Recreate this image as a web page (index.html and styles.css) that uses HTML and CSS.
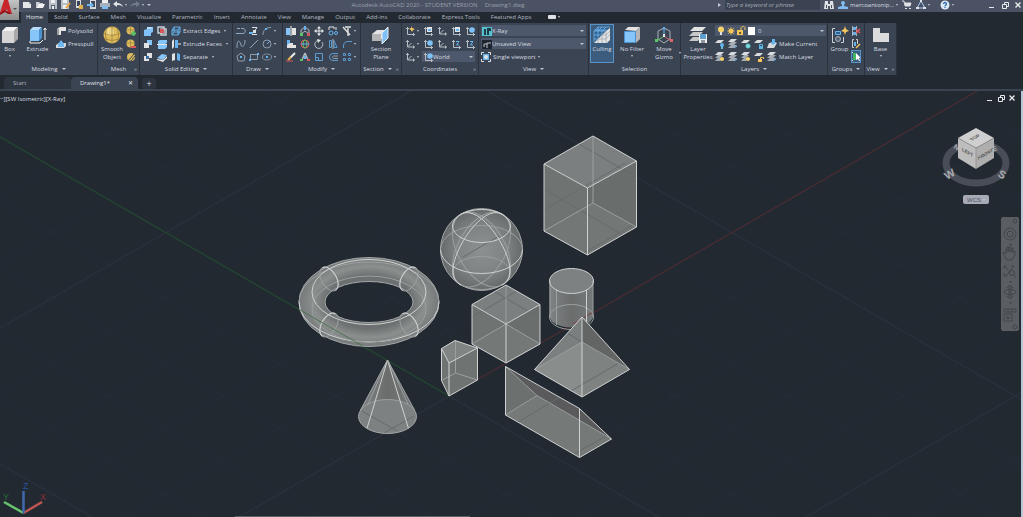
FILE: index.html
```html
<!DOCTYPE html>
<html lang="en">
<head>
    <meta charset="UTF-8">
    <meta name="viewport" content="width=device-width, initial-scale=1.0">
    <title>Autodesk AutoCAD 2020 - Drawing1.dwg</title>
    <link rel="stylesheet" href="styles.css">
</head>
<body>
    <!-- Icon sprite -->
    <svg class="sprite" aria-hidden="true">
        <symbol id="new" viewBox="0 0 10 10"><path fill="#e4e6e8" d="M1 2h6l2 2v4H1z"/><path fill="#9aa1aa" d="M7 2l2 2H7z"/></symbol>
        <symbol id="open" viewBox="0 0 10 10"><path fill="#c9cdd2" d="M1 2h3l1 1h3v1H3L1 8z"/><path fill="#eef0f1" d="M3 4h7L8 8H1z"/></symbol>
        <symbol id="save" viewBox="0 0 10 10"><path fill="#b9bfc6" d="M1 0h8v9H1z"/><path fill="#eceef0" d="M3 0h4v3H3z"/><path fill="#5b6675" d="M3 5h4v4H3z"/><path fill="#eceef0" d="M4 6h2v3H4z"/></symbol>
        <symbol id="saveas" viewBox="0 0 10 10"><path fill="#b9bfc6" d="M0 0h8v9H0z"/><path fill="#eceef0" d="M2 0h4v3H2zM2 5h4v4H2z"/><path stroke="#e8a33c" stroke-width="2" d="M9 3L5 8"/></symbol>
        <symbol id="web" viewBox="0 0 10 10"><path fill="#d9dcdf" d="M2 0h5v8H2z"/><path fill="#3c4656" d="M3 1h3v5H3z"/><path fill="#e2b04d" d="M5 5h4v4H5z"/></symbol>
        <symbol id="phone" viewBox="0 0 10 10"><path fill="#d9dcdf" d="M3 0h6v9H3z"/><path fill="#3c4656" d="M4 1h4v6H4z"/><path fill="#6cb6f0" d="M0 4h4V2l3 3-3 3V6H0z"/></symbol>
        <symbol id="print" viewBox="0 0 10 10"><path fill="#eceef0" d="M2 0h6v4H2z"/><path fill="#aab0b8" d="M0 3h10v4H0z"/><path fill="#7fbdf0" d="M2 6h6v3H2z"/></symbol>
        <symbol id="undo" viewBox="0 0 10 10"><path fill="#e4e6e8" d="M0 4l4-3v2c3 0 5 1 6 4-2-2-4-2-6-2v2z"/></symbol>
        <symbol id="redo" viewBox="0 0 10 10"><path fill="#737c8a" d="M10 4L6 1v2C3 3 1 4 0 7c2-2 4-2 6-2v2z"/></symbol>
        <symbol id="binoc" viewBox="0 0 10 10"><path fill="#dfe2e5" d="M1 1h3v3h2V1h3l1 8H6V6H4v3H0z"/><path fill="#4a5264" d="M2 5h1v3H2zM7 5h1v3H7z"/></symbol>
        <symbol id="user" viewBox="0 0 10 10"><circle cx="5" cy="3" r="2" fill="#7fbdf0"/><path fill="#7fbdf0" d="M4 4h2v2l4 1v2H0V7l4-1z"/></symbol>
        <symbol id="cart" viewBox="0 0 10 10"><path fill="none" stroke="#dfe2e5" d="M0 1h2l1 5h5l1-3H3"/><path fill="#dfe2e5" d="M3 3h6L8 6H3zM3 8h2v1H3zM7 8h2v1H7z"/></symbol>
        <symbol id="apps" viewBox="0 0 10 10"><path fill="none" stroke="#aacdf0" d="M5 1l4 7H1z"/><path fill="#dfe2e5" d="M4 0h2v2H4zM0 7h3v2H0zM7 7h3v2H7z"/></symbol>
        <symbol id="help" viewBox="0 0 10 10"><circle cx="5" cy="5" r="4.5" fill="#dce8f3"/><path fill="none" stroke="#2b6cb0" stroke-width="1.3" d="M3.5 4c0-2 3-2 3 0 0 1-1.500 1-1.500 2.300M5 7v1"/></symbol>

        <symbol id="box" viewBox="0 0 18 18"><path fill="#d5d5d5" d="M1 5h12v12H1z"/><path fill="#f3f3f3" d="M1 5l4-4h12l-4 4z"/><path fill="#a9a9a9" d="M13 5l4-4v12l-4 4z"/></symbol>
        <symbol id="extrude" viewBox="0 0 18 18"><path fill="#86c5f8" d="M1 4h9v11H1z"/><path fill="#b7defc" d="M1 4l3-3h9l-3 3z"/><path fill="#4b92cf" d="M10 4l3-3v11l-3 3z"/><path fill="none" stroke="#f0f0f0" d="M1 15v2h10l3-3M16 14V2M14.500 4L16 2l1.500 2"/></symbol>
        <symbol id="polysolid" viewBox="0 0 10 10"><path fill="#e3e3e3" d="M1 3l3-2h6v4H5v4H1z"/><path fill="#9c9c9c" d="M1 3h2v6H1z"/></symbol>
        <symbol id="presspull" viewBox="0 0 10 10"><path fill="#d9dcdf" d="M0 6l3-2h7v3L8 9H0z"/><path fill="#6fb8f2" d="M2 5l3-4 3 4v3H2z"/></symbol>
        <symbol id="smooth" viewBox="0 0 18 18"><circle cx="9" cy="9" r="8.500" fill="#dcbb5c"/><circle cx="7" cy="6" r="4" fill="#efd788"/><path fill="none" stroke="#957a31" stroke-width=".7" d="M1 7c5 3 11 3 16 0M1 12c5 3 11 3 16 0M9 1v16M4 2c-2 5-2 9 0 14M14 2c2 5 2 9 0 14"/></symbol>
        <symbol id="meshadd" viewBox="0 0 10 10"><circle cx="4.500" cy="4.500" r="4" fill="#dcbb5c"/><path stroke="#957a31" stroke-width=".6" fill="none" d="M1 4h7M4.500 1v7"/><path stroke="#5bc466" stroke-width="2" d="M5 7.500h5M7.500 5v5"/></symbol>
        <symbol id="meshdel" viewBox="0 0 10 10"><circle cx="4.500" cy="4.500" r="4" fill="#dcbb5c"/><path stroke="#957a31" stroke-width=".6" fill="none" d="M1 4h7M4.500 1v7"/><path stroke="#d9575b" stroke-width="2" d="M5 8h5"/></symbol>
        <symbol id="meshcut" viewBox="0 0 10 10"><circle cx="5" cy="5" r="4" fill="#dcbb5c"/><path stroke="#3b4453" stroke-width="1" d="M2 9L8 2M4 10l6-7"/></symbol>
        <symbol id="union" viewBox="0 0 10 10"><path fill="#7fc1f6" d="M1 4l3-1V1h6v5L8 7v3H1z"/><path fill="#b7defc" d="M4 1h6L8 3H4z"/></symbol>
        <symbol id="subtract" viewBox="0 0 10 10"><path fill="#86c5f8" d="M4 1h5v5H4z"/><path fill="#e3e3e3" d="M1 4h5v5H1z"/></symbol>
        <symbol id="intersect" viewBox="0 0 10 10"><path fill="#e3e3e3" d="M4 1h5v5H4zM1 4h5v5H1z"/><path fill="#3c6ea3" d="M3 4h3v3H3z"/></symbol>
        <symbol id="interfere" viewBox="0 0 10 10"><path fill="none" stroke="#c9cdd2" stroke-width="1.500" d="M1 1h6v6H1zM4 3h5v6H4z"/><path fill="#d9575b" d="M3 3h4v4H3z"/></symbol>
        <symbol id="slice" viewBox="0 0 10 10"><path fill="#86c5f8" d="M1 2l2-1h7v3L8 5H1zM1 6h7l2-1v3L8 10H1z"/><path stroke="#e3e3e3" d="M0 5.500h10"/></symbol>
        <symbol id="thicken" viewBox="0 0 10 10"><path fill="#86c5f8" d="M0 6l5-4 5 1-4 5z"/><path fill="#e3e3e3" d="M0 7l6 1 4-4v2L6 10 0 8z"/></symbol>
        <symbol id="extract" viewBox="0 0 10 10"><path fill="none" stroke="#67b3ee" d="M1 4h6v5H1zM1 4l2-3h6v5L7 9M7 4l2-3M3 1v5H9M3 6L1 9"/></symbol>
        <symbol id="faces" viewBox="0 0 10 10"><path fill="#e3e3e3" d="M1 2l2-2v8l-2 2z"/><path fill="#67b3ee" d="M4 1h3v8H4z"/><path stroke="#f0f0f0" d="M7 5h3"/></symbol>
        <symbol id="separate" viewBox="0 0 10 10"><path fill="#e3e3e3" d="M1 2l3-1v7L1 9z"/><path fill="#67b3ee" d="M6 1l3 1v7L6 8z"/></symbol>

        <symbol id="pline" viewBox="0 0 10 10"><path fill="none" stroke="#8fa9c2" d="M1 2.500h3M5 2.500h2c3 0 3 5 0 5H0"/></symbol>
        <symbol id="helix" viewBox="0 0 10 10"><path fill="none" stroke="#dfe2e5" d="M3 1.500h5L5 6M3 8.500h5"/><path fill="#67b3ee" d="M0 6h4v2H0z"/><path fill="#dfe2e5" d="M4 4h3v3H4z"/></symbol>
        <symbol id="arc" viewBox="0 0 10 10"><path fill="none" stroke="#8fa0b2" d="M1 9c0-5 3-7.500 8-7.500"/><path fill="#67b3ee" d="M3 2h2v2H3z"/></symbol>
        <symbol id="spline" viewBox="0 0 10 10"><path fill="none" stroke="#8fa9c2" d="M1 9c0-12 4-5 4-3s4 3 4-5"/></symbol>
        <symbol id="line" viewBox="0 0 10 10"><path stroke="#8fa9c2" d="M1 9l8-8"/></symbol>
        <symbol id="circle" viewBox="0 0 10 10"><circle cx="5" cy="5" r="4" fill="none" stroke="#8e9baa"/><path stroke="#67b3ee" d="M5 5l3-3"/></symbol>
        <symbol id="polygon" viewBox="0 0 10 10"><path fill="none" stroke="#8e9baa" d="M5 1l4 3-1 5H2L1 4z"/><path fill="#67b3ee" d="M4 4h2v2H4z"/></symbol>
        <symbol id="rect" viewBox="0 0 10 10"><path fill="none" stroke="#8e9baa" d="M1.500 2.500h7v5h-7z"/><path fill="#67b3ee" d="M0 7h2v2H0zM8 1h2v2H8z"/></symbol>
        <symbol id="ellipse" viewBox="0 0 10 10"><ellipse cx="5" cy="5" rx="4.500" ry="3" fill="none" stroke="#7d8c9d"/><path fill="#67b3ee" d="M4 4h2v2H4z"/></symbol>

        <symbol id="mirror" viewBox="0 0 10 10"><path fill="#86c5f8" d="M0 2h4v7H0z"/><path fill="#e3e3e3" d="M6 2h4v7H6z"/><path stroke="#fff" d="M5 0v10"/></symbol>
        <symbol id="gmove" viewBox="0 0 10 10"><path fill="none" stroke="#b4bac2" d="M5 1l4 3v4L5 5 1 8V4z"/><path fill="#d9575b" d="M7 7h3v3H7z"/><path fill="#5bc466" d="M0 7h3v3H0z"/><path fill="#67b3ee" d="M4 0h2v4H4z"/></symbol>
        <symbol id="move" viewBox="0 0 10 10"><path fill="#e8eaec" d="M5 0l2 2.500H5.500v2h2V3L10 5 7.500 7V5.500h-2v2H7L5 10 3 7.500h1.500v-2h-2V7L0 5l2.500-2v1.500h2v-2H3z"/></symbol>
        <symbol id="copy" viewBox="0 0 10 10"><circle cx="3" cy="7" r="2" fill="none" stroke="#67b3ee"/><circle cx="8" cy="7" r="1.500" fill="none" stroke="#67b3ee"/><path fill="none" stroke="#dfe2e5" d="M1 4V1h5v2M8 1v3"/></symbol>
        <symbol id="trim" viewBox="0 0 10 10"><path fill="none" stroke="#e3e3e3" stroke-width="1.400" d="M1 1l7 8M9 1H3M6 2v8"/></symbol>
        <symbol id="align" viewBox="0 0 10 10"><path fill="#67b3ee" d="M1 1h3v8H1z"/><path fill="#e3e3e3" d="M1 6l3-2h3v2h3v3H1z"/></symbol>
        <symbol id="grotate" viewBox="0 0 10 10"><circle cx="5" cy="5" r="4" fill="none" stroke="#d9575b"/><ellipse cx="5" cy="5" rx="2" ry="4" fill="none" stroke="#5bc466"/><path stroke="#67b3ee" d="M1 5h8"/></symbol>
        <symbol id="rotate" viewBox="0 0 10 10"><path fill="none" stroke="#b9bfc7" d="M4 1.500a4 4 0 1 0 4 1.500"/><path fill="#dfe2e5" d="M3 0l4 1-3 3z"/></symbol>
        <symbol id="flip" viewBox="0 0 10 10"><path fill="none" stroke="#5a9bd0" d="M1.500 1.500h2v7h-2zM6 8.500v-7l3 7z"/><path stroke="#aab1ba" d="M5 0v10"/></symbol>
        <symbol id="fillet" viewBox="0 0 10 10"><path fill="none" stroke="#5a9bd0" d="M1.500 9V7c0-3 2-4.500 4.500-4.500h4"/></symbol>
        <symbol id="erase" viewBox="0 0 10 10"><path stroke="#eceef0" stroke-width="2" d="M4 6l5-5"/><path stroke="#e2b04d" stroke-width="2" d="M2 8l3-3"/><path stroke="#d9575b" d="M0 9h7"/></symbol>
        <symbol id="gscale" viewBox="0 0 10 10"><path fill="none" stroke="#b4bac2" stroke-width="1.500" d="M5 1L2 8M5 1l3 7"/><path fill="#67b3ee" d="M4 4h2v3H4z"/><path fill="#5bc466" d="M0 7h3v2H0z"/><path fill="#d9575b" d="M7 7h3v2H7z"/></symbol>
        <symbol id="scale" viewBox="0 0 10 10"><path fill="none" stroke="#5a9bd0" d="M1.500 8.500v-7h7v7zM1.500 5.500h3v3"/></symbol>
        <symbol id="offset" viewBox="0 0 10 10"><path fill="none" stroke="#5a9bd0" d="M10 1.500H5a3.500 3.500 0 0 0 0 7h5"/><path fill="none" stroke="#9aa2ad" d="M10 4H6c-2 0-2 2.500 0 2.500h4"/></symbol>
        <symbol id="array" viewBox="0 0 10 10"><path fill="none" stroke="#5a9bd0" d="M1.500 1.500h2v2h-2zM6.500 1.500h2v2h-2zM1.500 6.500h2v2h-2zM6.500 6.500h2v2h-2z"/></symbol>

        <symbol id="section" viewBox="0 0 18 18"><path fill="#e3e3e3" d="M0 8l5-4h8v9H0z"/><path fill="#b5b5b5" d="M0 8h9v7H0z"/><path fill="#7fc1f6" stroke="#e9eef3" d="M10 7l6-6v11l-6 6z"/></symbol>
        <symbol id="ucs" viewBox="0 0 10 10"><path fill="none" stroke="#b7bdc5" d="M2.500 1v7H10M1 2.500h3M8.500 6.500v3M2.500 8l4-4"/></symbol>
        <symbol id="ucsworld" viewBox="0 0 10 10"><path fill="none" stroke="#b7bdc5" d="M2.500 1v7.500H10M1 2.500h3M8.500 7v3"/><circle cx="7" cy="4" r="2.800" fill="#7fc1f6"/></symbol>
        <symbol id="ucsstar" viewBox="0 0 10 10"><path fill="none" stroke="#b7bdc5" d="M2.500 1v7.500H10M1 2.500h3M8.500 7v3"/><path fill="#f4c65d" d="M6 0l1 2 3 1-2 1-1 2-1-2-2-1 2-1z"/></symbol>
        <symbol id="ucsface" viewBox="0 0 10 10"><path fill="none" stroke="#b7bdc5" d="M2.500 1v7.500H10M1 2.500h3M8.500 7v3"/><path fill="#dfe5ea" d="M4 1h5v5H4z"/><path fill="#67b3ee" d="M5 3h3v2H5z"/></symbol>
        <symbol id="ucsz" viewBox="0 0 10 10"><path fill="none" stroke="#b7bdc5" d="M2.500 1v7.500H10M1 2.500h3M8.500 7v3"/><path fill="none" stroke="#67b3ee" d="M5 2.500h3L5.500 6H8"/></symbol>

        <symbol id="xray" viewBox="0 0 10 10"><path fill="#54c3cf" d="M0 1h10v9H0z"/><path fill="#1d3b45" d="M2 3h2v6H2zM5 2h4v3H7v4H5z"/></symbol>
        <symbol id="unsaved" viewBox="0 0 10 10"><path fill="#1f252e" d="M0 1h10v9H0z"/><path fill="none" stroke="#bfc4ca" d="M2 8V5h3M5 9V4h4"/></symbol>
        <symbol id="viewport" viewBox="0 0 10 10"><path fill="none" stroke="#dfe2e5" d="M.5 3V.5H3M7 .5h2.500V3M9.500 7v2.500H7M3 9.500H.5V7"/><path fill="#67b3ee" d="M2 2h6v6H2z"/><circle cx="5" cy="5" r="2" fill="#e3e3e3"/></symbol>
        <symbol id="culling" viewBox="0 0 18 18"><path fill="#e3e3e3" d="M1 17L13 5l4-3v12l-3 3z"/><path fill="#2f6392" d="M1 5l4-4h12L1 16z"/><path fill="none" stroke="#7fc1f6" stroke-width=".7" d="M1 16V5l4-4h12M1 5h12M1 9h8M1 13h4M5 12V5l4-4M9 8V5l4-4M5 1v4M2 4h12"/><path fill="none" stroke="#9aa1aa" stroke-width=".7" d="M13 5v12M9 9v8M5 13v4M9 9h4l4-4M5 13h8l4-5"/></symbol>
        <symbol id="nofilter" viewBox="0 0 18 18"><path fill="#e3e3e3" d="M2 4l3-3h12l-4 4z"/><path fill="#b5b5b5" d="M13 5l4-4v12l-4 4z"/><path fill="#86c5f8" stroke="#4b92cf" d="M1.500 5.500h11v11h-11z"/></symbol>
        <symbol id="gizmo" viewBox="0 0 18 18"><path fill="none" stroke="#a9b0b9" d="M3 13V5l6-3 6 3v8l-6 4z"/><path fill="none" stroke="#67b3ee" d="M9 10V2M7.500 3.500L9 1l1.500 2.500"/><path stroke="#5bc466" d="M9 10l-7 5"/><path stroke="#e06567" d="M9 10l7 5"/><path fill="#5bc466" d="M0 13h3v3H0z"/><path fill="#e06567" d="M15 13h3v3h-3z"/><path fill="#e3e3e3" d="M8 8h2v3H8z"/></symbol>
        <symbol id="layers" viewBox="0 0 18 18"><path fill="#e3e3e3" d="M5 1h12l-4 4H1z"/><path fill="#c7c7c7" d="M4 6h10l-4 4H0zM4 11h8l-3 4H0z"/><path fill="#f0f0f0" d="M10 8h8v9h-8z"/><path fill="#5e9fd4" d="M11 8h6v5h-6z"/><path fill="#8d96a1" d="M12 14h4v3h-4z"/></symbol>

        <symbol id="bulb" viewBox="0 0 10 10"><circle cx="5" cy="3.500" r="3" fill="#f4d26b"/><path fill="#dfe2e5" d="M4 6h2v3H4z"/></symbol>
        <symbol id="sun" viewBox="0 0 10 10"><circle cx="5" cy="5" r="2.500" fill="#f4c65d"/><path stroke="#f4c65d" stroke-width=".6" d="M5 1v8M1 5h8M2 2l6 6M8 2L2 8"/></symbol>
        <symbol id="lock" viewBox="0 0 10 10"><path fill="#f4c65d" d="M1 4h6v5H1z"/><path fill="none" stroke="#f4c65d" d="M5 4V2c0-2 4-2 4 0v2"/><path fill="#6b5a2c" d="M3 6h2v2H3z"/></symbol>
        <symbol id="swatch" viewBox="0 0 10 10"><path fill="#fff" d="M2 1h7v8H2z"/></symbol>
        <symbol id="layblue" viewBox="0 0 10 10"><path fill="#d9dcdf" d="M3 1h6L6 4H0z"/><path fill="#5fc2d6" d="M6 6h2v4H6z"/><circle cx="7" cy="6" r="2" fill="#67b3ee"/></symbol>
        <symbol id="lay" viewBox="0 0 10 10"><path fill="#d9dcdf" d="M3 0h6L6 3H0z"/><path fill="#a5abb2" d="M3 3h6L6 6H0zM3 6h6L6 9H0z"/><path stroke="#7fc1f6" d="M6 9l3-2"/></symbol>
        <symbol id="layfreeze" viewBox="0 0 10 10"><path fill="#d9dcdf" d="M3 1h6L6 4H0z"/><circle cx="7" cy="7" r="2.500" fill="#4fb7bd"/><path stroke="#bff" stroke-width=".6" d="M5 7h4M7 5v4"/></symbol>
        <symbol id="laylock" viewBox="0 0 10 10"><path fill="#d9dcdf" d="M3 1h6L6 4H0z"/><path fill="#5cb5e8" d="M5 7h4v3H5z"/><path fill="none" stroke="#5cb5e8" d="M5.500 7V5.500h3V7"/></symbol>
        <symbol id="laycur" viewBox="0 0 10 10"><path fill="#d9dcdf" d="M2 4h8L7 9H0z"/><path fill="#67b3ee" d="M3 3h2V0h3v3h2L6 6z"/></symbol>
        <symbol id="layon" viewBox="0 0 10 10"><path fill="#d9dcdf" d="M3 0h6L6 3H0z"/><path fill="#a5abb2" d="M3 3h5L5 6H0zM3 6h5L5 9H0z"/><circle cx="7" cy="7" r="2" fill="#f4d26b"/></symbol>
        <symbol id="layunlock" viewBox="0 0 10 10"><path fill="#d9dcdf" d="M3 1h6L6 4H0z"/><path fill="#f4c65d" d="M4 7h4v3H4z"/><path fill="none" stroke="#f4c65d" d="M6.500 7V5.500h3V7"/></symbol>

        <symbol id="group" viewBox="0 0 18 18"><path fill="none" stroke="#cfd3d8" d="M4 2.500H1.500v14H4M10 16.500h2.500V11"/><path fill="#2f5f8d" stroke="#67b3ee" d="M4.500 5.500h5v3h-5z"/><circle cx="7" cy="13" r="2.500" fill="#596474" stroke="#aab1ba"/><path fill="#f4c65d" d="M14 0l1 3 3 2-3 1-1 3-1-3-3-1 3-2z"/></symbol>
        <symbol id="ungroup" viewBox="0 0 10 10"><path fill="none" stroke="#aab1ba" d="M1.500 0v10M5.500 0v10"/><path fill="#67b3ee" d="M2 1h3v3H2zM2 6h3v3H2z"/><path stroke="#d9575b" stroke-width="1.500" d="M5 3l4 4M9 3L5 7"/></symbol>
        <symbol id="groupedit" viewBox="0 0 10 10"><path fill="none" stroke="#cfd3d8" d="M3 .5H1.500v8H3M5 .5h1.500V5"/><path fill="#67b3ee" d="M3 3h2v4H3z"/><path stroke="#f4c65d" stroke-width="1.500" d="M9 5L5 9"/></symbol>
        <symbol id="groupsel" viewBox="0 0 10 10"><path fill="none" stroke="#dfe2e5" d="M2 .5H.5v8H2"/><path fill="#45b566" d="M2 1h3v7H2z"/><path fill="#fff" d="M5 1l5 5H8l1 3H8L7 7 5 8z"/></symbol>
        <symbol id="base" viewBox="0 0 18 18"><path fill="#dcdcdc" d="M1 2h7v5h9v9H1z"/></symbol>

        <symbol id="min" viewBox="0 0 10 10"><path fill="#e8eaec" d="M2 7h5v1H2z"/></symbol>
        <symbol id="restore" viewBox="0 0 10 10"><path fill="none" stroke="#e8eaec" d="M2.500 4.500h4v4h-4zM4.500 4V2.500h4v4H7"/></symbol>
        <symbol id="close" viewBox="0 0 10 10"><path stroke="#e8eaec" stroke-width="1.300" d="M2.500 2.500l5 5M7.500 2.500l-5 5"/></symbol>
    </svg>

    <!-- Title bar -->
    <header class="title-bar">
        <button class="app-logo" aria-label="Application menu">
            <svg viewBox="0 0 19 20"><path fill="#c9262c" d="M0 13L4 0h4l4 14H8L7 9 4 13z"/><path fill="#8e1519" d="M0 13l5-3 7 4H8L5 12l-5 3z"/><path fill="#555" d="M13 8h4l-2 2z"/></svg>
        </button>
        <div class="quick-access">
            <button aria-label="New"><svg class="icon"><use href="#new"/></svg></button>
            <button aria-label="Open"><svg class="icon"><use href="#open"/></svg></button>
            <button aria-label="Save"><svg class="icon"><use href="#save"/></svg></button>
            <button aria-label="Save as"><svg class="icon"><use href="#saveas"/></svg></button>
            <button aria-label="Open from web"><svg class="icon"><use href="#web"/></svg></button>
            <button aria-label="Save to mobile"><svg class="icon"><use href="#phone"/></svg></button>
            <button aria-label="Plot"><svg class="icon"><use href="#print"/></svg></button>
            <button aria-label="Undo"><svg class="icon"><use href="#undo"/></svg><i class="caret"></i></button>
            <button aria-label="Redo"><svg class="icon"><use href="#redo"/></svg><i class="caret"></i></button>
            <button aria-label="Customize"><i class="caret large"></i></button>
        </div>
        <div class="window-title"><span>Autodesk AutoCAD 2020 - STUDENT VERSION</span><span>Drawing1.dwg</span></div>
        <div class="info-center">
            <i class="caret right"></i>
            <input class="search" type="text" aria-label="Search" placeholder="Type a keyword or phrase">
            <button aria-label="Search"><svg class="icon"><use href="#binoc"/></svg></button>
            <button><svg class="icon"><use href="#user"/></svg>marcoantonip...<i class="caret"></i></button>
            <button aria-label="Store"><svg class="icon"><use href="#cart"/></svg></button>
            <button aria-label="Apps"><svg class="icon"><use href="#apps"/></svg><i class="caret"></i></button>
            <button class="help" aria-label="Help"><svg class="icon"><use href="#help"/></svg><i class="caret"></i></button>
        </div>
        <div class="window-controls">
            <button aria-label="Minimize"><svg class="icon"><use href="#min"/></svg></button>
            <button aria-label="Restore"><svg class="icon"><use href="#restore"/></svg></button>
            <button aria-label="Close"><svg class="icon"><use href="#close"/></svg></button>
        </div>
    </header>

    <nav class="menu">
        <button class="active">Home</button>
        <button>Solid</button>
        <button>Surface</button>
        <button>Mesh</button>
        <button>Visualize</button>
        <button>Parametric</button>
        <button>Insert</button>
        <button>Annotate</button>
        <button>View</button>
        <button>Manage</button>
        <button>Output</button>
        <button>Add-ins</button>
        <button>Collaborate</button>
        <button>Express Tools</button>
        <button>Featured Apps</button>
        <button class="ribbon-toggle" aria-label="Minimize ribbon"><b></b><i class="caret"></i></button>
    </nav>

    <!-- Ribbon -->
    <div class="ribbon">
        <section class="panel modeling">
            <div class="panel-body">
                <button class="big"><svg><use href="#box"/></svg>Box<i class="caret"></i></button>
                <button class="big"><svg><use href="#extrude"/></svg>Extrude<i class="caret"></i></button>
                <div class="rows">
                    <button><svg class="icon"><use href="#polysolid"/></svg>Polysolid</button>
                    <button><svg class="icon"><use href="#presspull"/></svg>Presspull</button>
                </div>
            </div>
            <h2>Modeling <i class="caret large"></i></h2>
        </section>

        <section class="panel mesh">
            <div class="panel-body">
                <button class="big"><svg><use href="#smooth"/></svg>Smooth<br>Object</button>
                <div class="rows">
                    <button aria-label="Smooth more"><svg class="icon"><use href="#meshadd"/></svg></button>
                    <button aria-label="Smooth less"><svg class="icon"><use href="#meshdel"/></svg></button>
                    <button aria-label="Refine"><svg class="icon"><use href="#meshcut"/></svg></button>
                </div>
            </div>
            <h2>Mesh<i class="launcher corner">&#187;</i></h2>
        </section>

        <section class="panel solid-editing">
            <div class="panel-body">
                <div class="rows">
                    <div class="row wide"><button aria-label="Union"><svg class="icon"><use href="#union"/></svg></button><button aria-label="Interfere"><svg class="icon"><use href="#interfere"/></svg></button><button><svg class="icon"><use href="#extract"/></svg>Extract Edges<i class="caret spaced"></i></button></div>
                    <div class="row wide"><button aria-label="Subtract"><svg class="icon"><use href="#subtract"/></svg></button><button aria-label="Slice"><svg class="icon"><use href="#slice"/></svg></button><button><svg class="icon"><use href="#faces"/></svg>Extrude Faces<i class="caret spaced"></i></button></div>
                    <div class="row wide"><button aria-label="Intersect"><svg class="icon"><use href="#intersect"/></svg></button><button aria-label="Thicken"><svg class="icon"><use href="#thicken"/></svg></button><button><svg class="icon"><use href="#separate"/></svg>Separate<i class="caret spaced"></i></button></div>
                </div>
            </div>
            <h2>Solid Editing <i class="caret large"></i></h2>
        </section>

        <section class="panel draw">
            <div class="panel-body">
                <div class="rows">
                    <div class="row"><button aria-label="Polyline"><svg class="icon"><use href="#pline"/></svg></button><button aria-label="Helix"><svg class="icon"><use href="#helix"/></svg></button><button aria-label="Arc"><svg class="icon"><use href="#arc"/></svg><i class="caret"></i></button></div>
                    <div class="row"><button aria-label="Spline"><svg class="icon"><use href="#spline"/></svg></button><button aria-label="Line"><svg class="icon"><use href="#line"/></svg></button><button aria-label="Circle"><svg class="icon"><use href="#circle"/></svg><i class="caret"></i></button></div>
                    <div class="row"><button aria-label="Polygon"><svg class="icon"><use href="#polygon"/></svg></button><button aria-label="Rectangle"><svg class="icon"><use href="#rect"/></svg></button><button aria-label="Ellipse"><svg class="icon"><use href="#ellipse"/></svg><i class="caret"></i></button></div>
                </div>
            </div>
            <h2>Draw <i class="caret large"></i></h2>
        </section>

        <section class="panel modify">
            <div class="panel-body">
                <div class="rows">
                    <div class="row wide"><button aria-label="3D mirror"><svg class="icon"><use href="#mirror"/></svg></button><button aria-label="3D move"><svg class="icon"><use href="#gmove"/></svg></button><button aria-label="Move"><svg class="icon"><use href="#move"/></svg></button><button aria-label="Copy"><svg class="icon"><use href="#copy"/></svg></button><button aria-label="Trim"><svg class="icon"><use href="#trim"/></svg><i class="caret"></i></button></div>
                    <div class="row wide"><button aria-label="3D align"><svg class="icon"><use href="#align"/></svg></button><button aria-label="3D rotate"><svg class="icon"><use href="#grotate"/></svg></button><button aria-label="Rotate"><svg class="icon"><use href="#rotate"/></svg></button><button aria-label="Mirror"><svg class="icon"><use href="#flip"/></svg></button><button aria-label="Fillet"><svg class="icon"><use href="#fillet"/></svg><i class="caret"></i></button></div>
                    <div class="row wide"><button aria-label="Erase"><svg class="icon"><use href="#erase"/></svg></button><button aria-label="3D scale"><svg class="icon"><use href="#gscale"/></svg></button><button aria-label="Scale"><svg class="icon"><use href="#scale"/></svg></button><button aria-label="Offset"><svg class="icon"><use href="#offset"/></svg></button><button aria-label="Array"><svg class="icon"><use href="#array"/></svg><i class="caret"></i></button></div>
                </div>
            </div>
            <h2>Modify <i class="caret large"></i></h2>
        </section>

        <section class="panel section">
            <div class="panel-body">
                <button class="big"><svg><use href="#section"/></svg>Section<br>Plane</button>
            </div>
            <h2>Section <i class="caret large"></i><i class="launcher">&#187;</i></h2>
        </section>

        <section class="panel coordinates">
            <div class="panel-body">
                <div class="rows">
                    <div class="row wide"><button aria-label="UCS origin"><svg class="icon"><use href="#ucsstar"/></svg><i class="caret"></i></button><button aria-label="UCS face"><svg class="icon"><use href="#ucsface"/></svg></button><button aria-label="UCS"><svg class="icon"><use href="#ucs"/></svg></button><button aria-label="UCS view"><svg class="icon"><use href="#ucsface"/></svg></button><button aria-label="UCS world"><svg class="icon"><use href="#ucsworld"/></svg></button></div>
                    <div class="row wide"><button aria-label="UCS object"><svg class="icon"><use href="#ucs"/></svg><i class="caret"></i></button><button aria-label="UCS previous"><svg class="icon"><use href="#ucsworld"/></svg></button><button aria-label="UCS X"><svg class="icon"><use href="#ucs"/></svg></button><button aria-label="UCS Z axis"><svg class="icon"><use href="#ucsz"/></svg></button><button aria-label="UCS three point"><svg class="icon"><use href="#ucsz"/></svg></button></div>
                    <div class="row"><button aria-label="UCS axis"><svg class="icon"><use href="#ucs"/></svg><i class="caret"></i></button>
                        <div class="combo"><svg class="icon"><use href="#ucsworld"/></svg><select aria-label="Coordinate system"><option>World</option></select><i class="caret large"></i></div></div>
                </div>
            </div>
            <h2>Coordinates<i class="launcher corner">&#187;</i></h2>
        </section>

        <section class="panel view">
            <div class="panel-body">
                <div class="rows">
                    <div class="combo"><svg class="icon"><use href="#xray"/></svg><select aria-label="Visual style"><option>X-Ray</option></select><i class="caret large"></i></div>
                    <div class="combo"><svg class="icon"><use href="#unsaved"/></svg><select aria-label="Saved view"><option>Unsaved View</option></select><i class="caret large"></i></div>
                    <button class="viewport-btn"><svg class="icon"><use href="#viewport"/></svg>Single viewport<i class="caret"></i></button>
                </div>
            </div>
            <h2>View <i class="caret large"></i></h2>
        </section>

        <section class="panel selection">
            <div class="panel-body">
                <button class="big pressed"><svg><use href="#culling"/></svg>Culling</button>
                <button class="big"><svg><use href="#nofilter"/></svg>No Filter<i class="caret"></i></button>
                <button class="big"><svg><use href="#gizmo"/></svg>Move<br>Gizmo<i class="caret side"></i></button>
            </div>
            <h2>Selection</h2>
        </section>

        <section class="panel layers">
            <div class="panel-body">
                <button class="big"><svg><use href="#layers"/></svg>Layer<br>Properties</button>
                <div class="rows">
                    <div class="combo layer-combo">
                        <span class="layer-state"><svg class="icon"><use href="#bulb"/></svg><svg class="icon"><use href="#sun"/></svg><svg class="icon"><use href="#lock"/></svg><svg class="icon"><use href="#swatch"/></svg></span>
                        <select aria-label="Layer"><option>0</option></select><i class="caret large"></i>
                    </div>
                    <div class="row"><button aria-label="Layer off"><svg class="icon"><use href="#layblue"/></svg></button><button aria-label="Layer isolate"><svg class="icon"><use href="#lay"/></svg></button><button aria-label="Layer freeze"><svg class="icon"><use href="#layfreeze"/></svg></button><button aria-label="Layer lock"><svg class="icon"><use href="#laylock"/></svg></button><button><svg class="icon"><use href="#laycur"/></svg>Make Current</button></div>
                    <div class="row"><button aria-label="Layers on"><svg class="icon"><use href="#layon"/></svg></button><button aria-label="Unisolate"><svg class="icon"><use href="#lay"/></svg></button><button aria-label="Thaw"><svg class="icon"><use href="#layon"/></svg></button><button aria-label="Unlock"><svg class="icon"><use href="#layunlock"/></svg></button><button><svg class="icon"><use href="#lay"/></svg>Match Layer</button></div>
                </div>
            </div>
            <h2>Layers <i class="caret large"></i></h2>
        </section>

        <section class="panel groups">
            <div class="panel-body">
                <button class="big"><svg><use href="#group"/></svg>Group</button>
                <div class="rows">
                    <button aria-label="Ungroup"><svg class="icon"><use href="#ungroup"/></svg></button>
                    <button aria-label="Group edit"><svg class="icon"><use href="#groupedit"/></svg></button>
                    <button class="pressed" aria-label="Group selection"><svg class="icon"><use href="#groupsel"/></svg></button>
                </div>
            </div>
            <h2>Groups <i class="caret large"></i></h2>
        </section>

        <section class="panel base-view">
            <div class="panel-body">
                <button class="big"><svg><use href="#base"/></svg>Base<i class="caret"></i></button>
            </div>
            <h2>View <i class="caret large"></i><i class="launcher">&#187;</i></h2>
        </section>
    </div>

    <!-- File tabs -->
    <div class="file-tabs">
        <button class="file-tab">Start</button>
        <button class="file-tab active">Drawing1*<span>&#10005;</span></button>
        <button class="add-tab" aria-label="New drawing">+</button>
    </div>

    <!-- Model space -->
    <main class="canvas">
        <svg class="scene" viewBox="0 91 1021 426" preserveAspectRatio="xMidYMid slice">
            <defs>
                <pattern id="minor" x="449" y="396" width="113.300" height="65.400" patternUnits="userSpaceOnUse"><path d="M0 0l113.300 65.400M0 65.400L113.300 0" stroke="#232b35"/></pattern>
                <pattern id="major" x="449" y="396" width="566.500" height="327" patternUnits="userSpaceOnUse"><path d="M0 0l566.500 327M0 327L566.500 0" stroke="#29313c"/></pattern>
                <radialGradient id="ball"><stop offset="0" stop-color="#8c9090"/><stop offset=".6" stop-color="#7f8383"/><stop offset="1" stop-color="#666a6a"/></radialGradient>
                <radialGradient id="ring" gradientUnits="userSpaceOnUse" cx="369" cy="302" r="70" gradientTransform="translate(0 111.700) scale(1 .63)"><stop offset=".6" stop-color="#6c7070"/><stop offset=".8" stop-color="#8b8f8e"/><stop offset="1" stop-color="#757979"/></radialGradient>
                <linearGradient id="round"><stop offset="0" stop-color="#7f8383"/><stop offset=".5" stop-color="#6b6d6d"/><stop offset="1" stop-color="#757979"/></linearGradient>
            </defs>
            <rect y="91" width="1021" height="426" fill="url(#minor)"/>
            <rect y="91" width="1021" height="426" fill="url(#major)"/>
            <path d="M0 137l449 259" stroke="#1f4f2a"/>
            <path d="M449 396L977 91" stroke="#58272d"/>

            <!-- large box -->
            <g class="shape">
                <path fill="#7b7f7f" d="M593 136l-49 28 43.500 24 49-27z"/>
                <path fill="#6f7473" d="M544 164v67l43.500 24v-67z"/>
                <path fill="#696e6c" d="M587.500 188v67l49-28v-66z"/>
                <path fill="#737776" d="M544 231l49-28 43.500 24-49 28z"/>
                <path class="ghost" d="M579 144l57 33M544 189l79 46M544 210l81-47M584 253l52-30"/>
                <path class="hidden" d="M593 136v67l-49 28M593 203l43.500 24"/>
                <path class="edge" d="M593 136l-49 28 43.500 24 49-27zM544 164v67l43.500 24v-67M587.500 255l49-28v-66"/>
            </g>

            <!-- sphere -->
            <g class="shape">
                <circle cx="481.500" cy="249.500" r="41" fill="url(#ball)"/>
                <path class="ghost" d="M463 257l36-21"/>
                <g class="hidden"><path d="M440.500 249.500a41 24 0 0 1 82 0"/><ellipse cx="481.500" cy="273" rx="29" ry="16.500"/><ellipse cx="481.500" cy="249.500" rx="41" ry="23.700" transform="rotate(60 481.500 249.500)"/><ellipse cx="481.500" cy="249.500" rx="41" ry="23.700" transform="rotate(-60 481.500 249.500)"/></g>
                <circle class="edge soft" cx="481.500" cy="249.500" r="41"/>
                <ellipse class="edge" cx="481.500" cy="226" rx="29" ry="16.500"/>
                <path class="edge" d="M440.500 249.500a41 24 0 0 0 82 0"/>
                <path class="edge" d="M502 214c-20-10-49 36-49 56 0 8 3 13 8 15M461 214c20-10 49 36 49 56 0 8-3 13-8 15"/>
            </g>

            <!-- torus -->
            <g class="shape">
                <path fill="url(#ring)" fill-rule="evenodd" d="M299 302a70 44.500 0 1 0 140 0a70 44.500 0 1 0-140 0zM325 302a44 20.500 0 1 0 88 0a44 20.500 0 1 0-88 0z"/>
                <ellipse class="edge soft" cx="369" cy="302" rx="70" ry="44.500"/>
                <ellipse class="edge soft" cx="369" cy="302" rx="44" ry="20.500"/>
                <path class="hidden" d="M312 309a57 33 0 0 1 114 0M299 302a70 40 0 0 1 140 0"/>
                <ellipse class="edge" cx="369" cy="292" rx="57" ry="32.500"/>
                <path class="edge" d="M299 302a70 40 0 0 0 140 0"/>
                <path class="hidden" d="M312 309a57 33 0 0 0 114 0"/>
                <g class="hidden"><ellipse cx="329" cy="279" rx="13" ry="7.500" transform="rotate(60 329 279)"/><ellipse cx="409" cy="279" rx="13" ry="7.500" transform="rotate(-60 409 279)"/><ellipse cx="329" cy="325" rx="13" ry="7.500" transform="rotate(-60 329 325)"/><ellipse cx="409" cy="325" rx="13" ry="7.500" transform="rotate(60 409 325)"/></g>
                <g class="edge"><path d="M-13 0a13 7.500 0 0 1 26 0" transform="translate(329 279) rotate(60)"/><path d="M-13 0a13 7.500 0 0 1 26 0" transform="translate(409 279) rotate(-60)"/><path d="M-13 0a13 7.500 0 0 1 26 0" transform="translate(329 325) rotate(-60)"/><path d="M-13 0a13 7.500 0 0 1 26 0" transform="translate(409 325) rotate(60)"/></g>
                <path d="M300 310l63 36" stroke="#4f7355"/>
            </g>

            <!-- small box -->
            <g class="shape">
                <path fill="#7b7f7f" d="M506 285l-34 19.500 34 19.500 34-19.500z"/>
                <path fill="#6f7473" d="M472 304.500V344l34 19v-39z"/>
                <path fill="#6a6f6d" d="M540 304.500V344l-34 19v-39z"/>
                <path fill="#747978" d="M472 344l34-20 34 20-34 19z"/>
                <path class="ghost" d="M495 292l45 26M472 317l45-26"/>
                <path class="hidden" d="M506 285v39M472 344l34-20 34 20"/>
                <path class="edge" d="M506 285l-34 19.500 34 19.500 34-19.500zM472 304.500V344l34 19v-39M506 363l34-19v-39.500"/>
            </g>

            <!-- cylinder -->
            <g class="shape">
                <path fill="url(#round)" d="M549.500 281v36a22 12.500 0 0 0 43.500 0v-36z"/>
                <ellipse cx="571.500" cy="281" rx="22" ry="12.500" fill="#7d8181"/>
                <path stroke="#7d3d40" d="M573 324l20-12"/>
                <ellipse class="hidden" cx="571.500" cy="317" rx="22" ry="12.500"/>
                <path class="hidden" d="M550 281v36M593 281v36M556.500 289v36"/>
                <path class="edge" d="M586.500 290v36"/>
                <ellipse class="edge" cx="571.500" cy="281" rx="22" ry="12.500"/>
            </g>

            <!-- pyramid -->
            <g class="shape">
                <path fill="#7b7f7f" d="M582 317l-47.500 52.500L582 397z"/>
                <path fill="#636565" d="M582 317v25l47.500 27.500z"/>
                <path fill="#7e8281" d="M582 342l47.500 27.500L582 397z"/>
                <path fill="#898d8c" d="M534.500 369.500L582 342v55z"/>
                <path class="ghost" d="M571 391l48-28M567 333l15 9"/>
                <path class="hidden" d="M534.500 369.500L582 342l47.500 27.500"/>
                <path class="edge" d="M582 317l-47.500 52.500L582 397l47.500-27.500zM582 317v80"/>
            </g>

            <!-- four sided prism -->
            <g class="shape">
                <path fill="#6f7473" d="M455 340.500l-13.500 8v32l7.500 15.500 28.500-16v-32z"/>
                <path fill="#808483" d="M455 340.500l-13.500 8 7.500 14.500 28.500-15z"/>
                <path class="hidden" d="M455.500 340.500V373l-14 7.500M455.500 373l22 7"/>
                <path class="edge" d="M455 340.500l-13.500 8 7.500 14.500 28.500-15zM441.500 348.500v32L449 396v-33M449 396l28.500-16v-32"/>
            </g>

            <!-- wedge -->
            <g class="shape">
                <path fill="#6c706f" d="M505.500 366.500V415L537 395.500z"/>
                <path fill="#757978" d="M505.500 415l31.500-19.500 74.500 43.500-32 18.500z"/>
                <path fill="#5a5a5c" d="M505.500 366.500l74 42 32 30.500-74.500-43.500z"/>
                <path class="ghost" d="M518 422l42-25M574 454l34-19"/>
                <path class="hidden" d="M505.500 366.500l31.500 29-31.500 19.500M537 395.500l74.500 43.500"/>
                <path class="edge" d="M505.500 366.500V415l74 42.500 32-18.500-32-30.500zM579.500 408.500v49"/>
            </g>

            <!-- cone -->
            <g class="shape">
                <path fill="url(#round)" d="M387.500 360l-27 50a29 17 0 1 0 54 0z"/>
                <ellipse cx="387.500" cy="416.500" rx="29" ry="17" fill="#7d8181"/>
                <path class="ghost" d="M362 411l35 20M384 433l30-17"/>
                <path class="hidden" d="M387.500 360l-20 45M387.500 360l21 45M358.500 416.500a29 17 0 0 1 58 0"/>
                <path class="edge" d="M387.500 360L367 428.500M387.500 360l21 68.500"/>
                <path class="edge soft" d="M387.500 360l-27 50M387.500 360l27 50M358.500 416.500a29 17 0 0 0 58 0"/>
            </g>

            <!-- axis icon -->
            <g stroke-width="2.500">
                <path stroke="#67c46d" d="M23.500 513L4 502"/>
                <path stroke="#bd5552" d="M23.500 513L42 502"/>
                <path stroke="#4169ae" d="M23.500 513v-22"/>
            </g>
            <g class="axis-label">
                <text x="3" y="500" fill="#276e35">Y</text>
                <text x="23" y="489" fill="#2654a5">Z</text>
                <text x="40" y="500" fill="#8d3136">X</text>
            </g>
        </svg>

        <div class="viewport-label">&#8722;][SW Isometric][X-Ray]</div>
        <div class="viewport-tools">
            <div class="viewport-controls">
                <button aria-label="Minimize viewport"><svg class="icon"><use href="#min"/></svg></button>
                <button aria-label="Restore viewport"><svg class="icon"><use href="#restore"/></svg></button>
                <button aria-label="Close viewport"><svg class="icon"><use href="#close"/></svg></button>
            </div>
            <svg class="view-cube" viewBox="0 0 72 66">
                <path fill="none" stroke="#484d58" stroke-width="7" d="M6 40a30 20 0 1 0 60 0a30 20 0 1 0-60 0z"/>
                <g class="compass"><text transform="translate(7 57) rotate(-30)">W</text><text transform="translate(57 53) rotate(30)">S</text><text class="far" transform="translate(13 25) rotate(30)">N</text><text class="far" transform="translate(54 29) rotate(-30)">E</text></g>
                <path fill="#cfcfcf" d="M36 5l18 10-18 10-18-10z"/>
                <path fill="#bdbdbd" d="M18 15v20l18 11V25z"/>
                <path fill="#aeaeae" d="M54 15v20L36 46V25z"/>
                <path fill="none" stroke="#777" stroke-width=".5" d="M18 15l18 10 18-10M36 25v21"/>
                <g class="face"><text transform="matrix(.87 -.5 .87 .5 32 18)">TOP</text><text transform="matrix(.87 .5 0 1 22 28)">LEFT</text><text class="front" transform="matrix(.87 -.5 0 1 38 37)">FRONT</text></g>
            </svg>
            <button class="wcs">WCS <i class="caret"></i></button>
            <div class="nav-bar">
                <svg viewBox="0 0 18 114">
                    <g fill="none" stroke="#42464b">
                        <circle cx="14" cy="4" r="2"/>
                        <circle cx="9" cy="17" r="6"/><circle cx="9" cy="17" r="3"/>
                        <path d="M4 40l-2-4 1-1 2 2v-5h1v3-5h2v5-5h2v5l1-4h1v5l2-2v4l-3 5H6z"/>
                        <path d="M3 49l5 5M13 49l-8 10M3 49h3M3 49v3M13 49h-3M3 59v-3M3 59h3"/><circle cx="11" cy="56" r="2.500"/><path d="M13 58l2 3"/>
                        <ellipse cx="9" cy="75" rx="6" ry="2.500"/><path d="M8 69v12M10 69v12M6 71l3-3 3 3M6 79l3 3 3-3"/>
                        <path d="M3 92h12v3H3zM7 92v3M11 92v3M3 97h8v7H3zM6 99l3 2-3 1z"/>
                        <circle cx="14" cy="110" r="2"/>
                    </g>
                    <path fill="#3d4248" d="M8 27h3l-1 2zM8 64h3l-1 2zM8 85h3l-1 2z"/>
                </svg>
            </div>
        </div>
        <div class="command-line"></div>
    </main>
</body>
</html>
```

FILE: styles.css
```css
* {
    box-sizing: border-box;
}
body {
    margin: 0;
    height: 100vh;
    display: flex;
    flex-direction: column;
    overflow: hidden;
    background: #222931;
    color: #d9dce0;
    font-family: "Open Sans", "Noto Sans", sans-serif;
    font-size: 6px;
    line-height: 8px;
}
button, input, select {
    font: inherit;
    color: inherit;
    background: none;
    border: none;
    padding: 0;
    margin: 0;
}
button {
    display: flex;
    align-items: center;
    gap: 2px;
    white-space: nowrap;
}
.sprite {
    position: absolute;
    width: 0;
    height: 0;
}
.icon {
    display: block;
    width: 10px;
    height: 10px;
    flex: none;
}
.caret {
    display: inline-block;
    flex: none;
    border: 1px solid transparent;
    border-top: 2px solid #c3c8cf;
    border-bottom: none;
}
.caret.large {
    border-width: 2px 2px 0;
}
.caret.spaced {
    margin-left: 2px;
}
.caret.right {
    border: 2px solid transparent;
    border-left: 3px solid #c3c8cf;
    border-right: none;
}

/* Title bar */
.title-bar {
    position: relative;
    display: flex;
    align-items: center;
    flex: none;
    height: 12px;
    padding-bottom: 2px;
    background: #4a5264;
}
.app-logo {
    position: absolute;
    left: 0;
    top: 0;
    z-index: 2;
    width: 19px;
    height: 20px;
    background: linear-gradient(#c5c5c5, #8d8d8d);
}
.app-logo svg {
    width: 19px;
    height: 20px;
}
.quick-access {
    display: flex;
    gap: 3px;
    width: 160px;
    padding-left: 22px;
}
.window-title {
    flex: 1;
    display: flex;
    justify-content: center;
    gap: 7px;
    color: #9aa0aa;
    white-space: nowrap;
}
.info-center {
    display: flex;
    align-items: center;
    gap: 4px;
    width: 271px;
}
.info-center .caret.right {
    margin-left: 2px;
}
.info-center .help {
    margin-left: 6px;
}
.search {
    width: 95px;
    height: 10px;
    padding: 0 1px;
    background: #3b4352;
    font-style: italic;
}
.search::placeholder {
    color: #a5abb5;
}
.window-controls {
    display: flex;
    gap: 3px;
    margin-left: auto;
}

/* Menu tabs */
.menu {
    display: flex;
    gap: 1px;
    flex: none;
    height: 11px;
    padding-left: 21px;
}
.menu button {
    padding: 0 5px 2px;
    color: #b5bac2;
}
.menu .active {
    background: #3b4453;
    color: #e4e6e9;
}
.ribbon-toggle b {
    width: 8px;
    height: 4px;
    margin-left: 6px;
    border-radius: 1px;
    background: #dfe2e5;
}

/* Ribbon */
.ribbon {
    display: flex;
    flex: none;
    height: 52px;
}
.panel {
    display: flex;
    flex-direction: column;
    flex: none;
    padding-top: 1px;
    background: #3b4453;
    border-right: 1px solid #2b323e;
}
.panel-body {
    display: flex;
    height: 39px;
}
.panel h2 {
    position: relative;
    display: flex;
    align-items: center;
    justify-content: center;
    gap: 4px;
    height: 11px;
    margin: 0;
    font-size: 6px;
    font-weight: normal;
    white-space: nowrap;
}
.launcher {
    font-style: normal;
    color: #aeb4bd;
}
.launcher.corner {
    position: absolute;
    right: 2px;
}
.rows {
    display: flex;
    flex-direction: column;
}
.rows > * {
    height: 13px;
}
.row {
    display: flex;
    align-items: center;
    gap: 3px;
}
.row.wide {
    gap: 4px;
}
.big {
    position: relative;
    flex-direction: column;
    justify-content: flex-start;
    gap: 0;
    padding-top: 2px;
    text-align: center;
}
.big svg {
    width: 18px;
    height: 18px;
    margin-bottom: 1px;
    flex: none;
}
.big .caret {
    margin-top: 2px;
}
.big .caret.side {
    position: absolute;
    right: -3px;
    bottom: 9px;
}
.pressed {
    background: #3c5c7d;
    outline: 1px solid #5793c6;
    outline-offset: -1px;
}

.modeling { width: 98px; }
.modeling .big:first-child { width: 19px; }
.modeling .big + .big { width: 37px; }
.mesh { width: 42px; }
.mesh .big { width: 28px; }
.solid-editing { width: 93px; }
.draw { width: 50px; }
.modify { width: 78px; }
.section { width: 41px; }
.section .big { width: 40px; }
.coordinates { width: 77px; }
.view { width: 110px; }
.selection { width: 92px; }
.layers { width: 147px; }
.layers .big { width: 34px; }
.groups { width: 37px; }
.groups .big { width: 23px; }
.base-view { width: 32px; }
.base-view .big { width: 31px; }
.solid-editing .rows, .draw .rows, .modify .rows, .coordinates .rows {
    padding-left: 3px;
}
.view .rows {
    flex: 1;
    padding: 0 2px;
}
.selection .panel-body {
    gap: 4px;
    padding-left: 1px;
}
.selection .big {
    width: 24px;
}
.selection .big + .big {
    width: 28px;
}
.layers .rows {
    width: 111px;
}

/* Drop-downs */
.combo {
    position: relative;
    display: flex;
    align-items: center;
    flex: 1;
}
.combo select {
    appearance: none;
    width: 100%;
    height: 11px;
    padding-left: 11px;
    background: #4d586c;
}
.combo > .icon, .layer-state {
    position: absolute;
    left: 1px;
}
.combo .caret {
    position: absolute;
    right: 2px;
}
.view .combo {
    flex: none;
}
.layer-combo {
    flex: none;
}
.layer-combo select {
    padding-left: 43px;
}
.layer-state {
    display: flex;
}

/* File tabs */
.file-tabs {
    display: flex;
    align-items: flex-end;
    flex: none;
    height: 16px;
    padding-left: 4px;
    border-bottom: 2px solid #3b4453;
}
.file-tab {
    justify-content: space-between;
    width: 67px;
    height: 12px;
    padding: 0 5px 0 9px;
    border-radius: 4px 4px 0 0;
    background: #2d3541;
    color: #aeb3bb;
}
.file-tab.active {
    background: #3b4453;
    color: #e0e2e5;
}
.add-tab {
    justify-content: center;
    width: 14px;
    height: 11px;
    margin-left: 4px;
    border-radius: 3px;
    background: #2d3541;
    font-size: 9px;
}

/* Model space */
.canvas {
    position: relative;
    flex: 1;
    min-height: 0;
    border-right: 2px solid #b9c6d6;
}
.scene {
    position: absolute;
    width: 100%;
    height: 100%;
}
.edge {
    fill: none;
    stroke: #d0d2d2;
}
.edge.soft {
    stroke: #a3a6a6;
}
.hidden {
    fill: none;
    stroke: #9b9f9f;
}
.ghost {
    fill: none;
    stroke: #666b6c;
}
.axis-label {
    font-family: "Liberation Sans", Arial, sans-serif;
    font-size: 9px;
}
.viewport-label {
    position: absolute;
    left: 0;
    top: 4px;
}
.viewport-tools {
    position: absolute;
    top: 2px;
    right: 2px;
    display: flex;
    flex-direction: column;
    align-items: flex-end;
}
.viewport-controls {
    display: flex;
    gap: 1px;
    margin-right: 2px;
}
.view-cube {
    width: 72px;
    height: 66px;
    margin: 20px 7px 0 0;
}
.compass {
    fill: #a9abaf;
    font-family: "Liberation Sans", Arial, sans-serif;
    font-size: 11px;
    font-weight: bold;
}
.compass .far {
    font-size: 7px;
}
.face {
    fill: #555;
    font-family: "Liberation Sans", Arial, sans-serif;
    font-size: 5px;
    font-weight: bold;
}
.wcs {
    justify-content: center;
    width: 26px;
    height: 9px;
    margin: 6px 30px 13px 0;
    border-radius: 2px;
    background: #a6aab6;
    color: #4f535d;
    font-family: "Liberation Sans", Arial, sans-serif;
}
.nav-bar {
    width: 18px;
    height: 114px;
    border-radius: 2px;
    background: #5a5e62;
}
.command-line {
    position: absolute;
    left: 23%;
    bottom: 0;
    width: 23%;
    height: 1px;
    background: #5b5f65;
}
```
